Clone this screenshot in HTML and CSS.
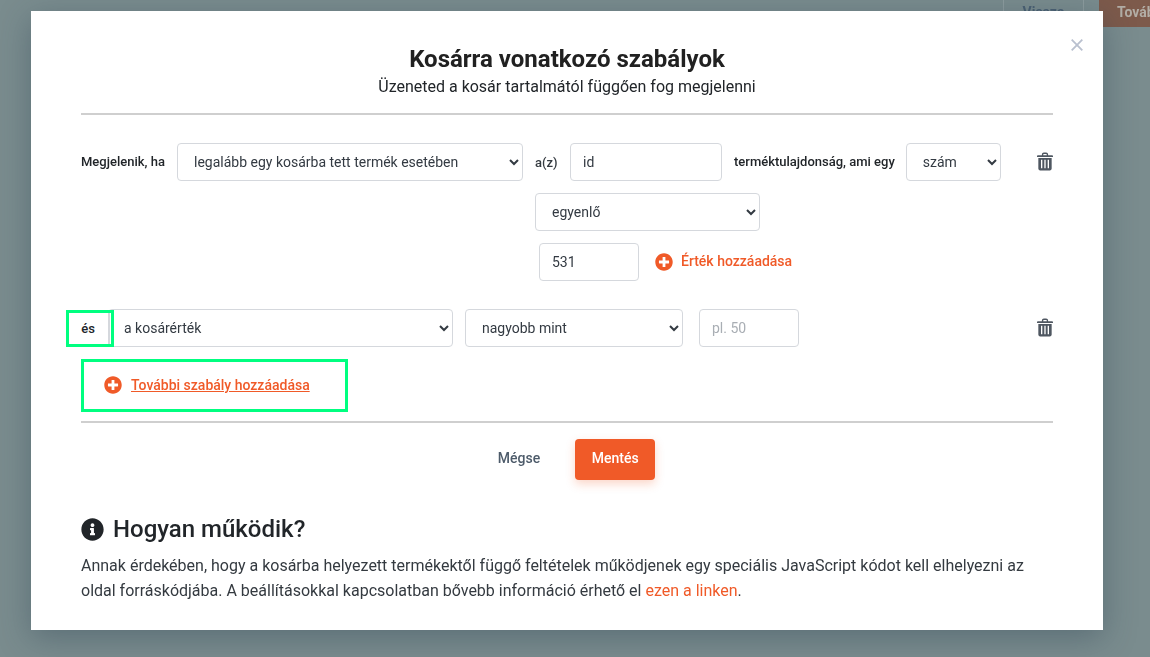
FILE: index.html
```html
<!DOCTYPE html>
<html lang="hu">
<head>
<meta charset="utf-8">
<title>Kosárra vonatkozó szabályok</title>
<link rel="stylesheet" href="styles.css">
</head>
<body>
<div class="backdrop"></div>
<div class="page-actions">
  <span class="page-back">Vissza</span>
  <span class="page-next">Tovább</span>
</div>
<main class="modal">
  <span class="close">
    <svg viewBox="0 0 12 12" width="12" height="12"><path d="M.7.7l10.600 10.600M11.300.7L.7 11.300" fill="none" stroke="currentColor" stroke-width="1.800"/></svg>
  </span>
  <header class="head">
    <h1 class="title">Kosárra vonatkozó szabályok</h1>
    <p class="subtitle">Üzeneted a kosár tartalmától függően fog megjelenni</p>
  </header>
  <section class="rules">
    <div class="rule rule-first">
      <span class="label label-start">Megjelenik, ha</span>
      <select class="field sel-scope"><option>legalább egy kosárba tett termék esetében</option></select>
      <div class="stack">
        <div class="line">
          <span class="az">a(z)</span>
          <input class="field in-prop" value="id">
          <span class="label">terméktulajdonság, ami egy</span>
          <select class="field sel-type"><option>szám</option></select>
        </div>
        <select class="field sel-op"><option>egyenlő</option></select>
        <div class="line line-value">
          <input class="field in-value" value="531">
          <a class="add-value">
            <svg class="plus" viewBox="0 0 512 512"><path fill="currentColor" d="M256 8C119 8 8 119 8 256s111 248 248 248 248-111 248-248S393 8 256 8zm144 276c0 6.600-5.400 12-12 12h-92v92c0 6.600-5.400 12-12 12h-56c-6.600 0-12-5.400-12-12v-92h-92c-6.600 0-12-5.400-12-12v-56c0-6.600 5.400-12 12-12h92v-92c0-6.600 5.400-12 12-12h56c6.600 0 12 5.400 12 12v92h92c6.600 0 12 5.400 12 12v56z"/></svg>
            <span class="add-value-text">Érték hozzáadása</span>
          </a>
        </div>
      </div>
      <svg class="trash" viewBox="0 0 18 20"><path fill="currentColor" fill-rule="evenodd" d="M5.500 3V2.200C5.500 1 6.500 0 7.700 0h2.600c1.200 0 2.200 1 2.200 2.200V3H17a1 1 0 0 1 1 1v1H0V4a1 1 0 0 1 1-1zm1.500 0h4V2.200c0-.4-.3-.7-.7-.7H7.700c-.4 0-.7.3-.7.7zM1.500 6h15v12c0 1.100-.9 2-2 2h-11c-1.100 0-2-.9-2-2zM4.500 8v9.500H6V8zm3.750 0v9.500h1.500V8zM12 8v9.500h1.500V8z"/></svg>
    </div>
    <div class="rule rule-second">
      <span class="and">és</span>
      <select class="field sel-value"><option>a kosárérték</option></select>
      <select class="field sel-cmp"><option>nagyobb mint</option></select>
      <input class="field in-amount" placeholder="pl. 50">
      <svg class="trash" viewBox="0 0 18 20"><path fill="currentColor" fill-rule="evenodd" d="M5.500 3V2.200C5.500 1 6.500 0 7.700 0h2.600c1.200 0 2.200 1 2.200 2.200V3H17a1 1 0 0 1 1 1v1H0V4a1 1 0 0 1 1-1zm1.500 0h4V2.200c0-.4-.3-.7-.7-.7H7.700c-.4 0-.7.3-.7.7zM1.500 6h15v12c0 1.100-.9 2-2 2h-11c-1.100 0-2-.9-2-2zM4.500 8v9.500H6V8zm3.750 0v9.500h1.500V8zM12 8v9.500h1.500V8z"/></svg>
    </div>
    <a class="add-rule">
      <svg class="plus" viewBox="0 0 512 512"><path fill="currentColor" d="M256 8C119 8 8 119 8 256s111 248 248 248 248-111 248-248S393 8 256 8zm144 276c0 6.600-5.400 12-12 12h-92v92c0 6.600-5.400 12-12 12h-56c-6.600 0-12-5.400-12-12v-92h-92c-6.600 0-12-5.400-12-12v-56c0-6.600 5.400-12 12-12h92v-92c0-6.600 5.400-12 12-12h56c6.600 0 12 5.400 12 12v92h92c6.600 0 12 5.400 12 12v56z"/></svg>
      <span class="add-rule-text">További szabály hozzáadása</span>
    </a>
  </section>
  <div class="actions">
    <span class="cancel">Mégse</span>
    <span class="save">Mentés</span>
  </div>
  <section class="help">
    <h2 class="help-title">
      <svg class="info" viewBox="0 0 512 512"><path fill="currentColor" d="M256 8C119 8 8 119.100 8 256c0 137 111 248 248 248s248-111 248-248C504 119.100 393 8 256 8zm0 110c23.200 0 42 18.800 42 42s-18.800 42-42 42-42-18.800-42-42 18.800-42 42-42zm56 254c0 6.600-5.400 12-12 12h-88c-6.600 0-12-5.400-12-12v-24c0-6.600 5.400-12 12-12h12v-64h-12c-6.600 0-12-5.400-12-12v-24c0-6.600 5.400-12 12-12h64c6.600 0 12 5.400 12 12v100h12c6.600 0 12 5.400 12 12v24z"/></svg>
      Hogyan működik?
    </h2>
    <p class="help-text">Annak érdekében, hogy a kosárba helyezett termékektől függő feltételek működjenek egy speciális JavaScript kódot kell elhelyezni az oldal forráskódjába. A beállításokkal kapcsolatban bővebb információ érhető el <a class="help-link">ezen a linken</a>.</p>
  </section>
</main>
</body>
</html>
```
FILE: styles.css
```css
* { box-sizing: border-box; }
html, body { height: 100%; }
body {
  margin: 0;
  overflow: hidden;
  background: #7a8c8e;
  font-family: Roboto, "Liberation Sans", sans-serif;
  color: #212529;
}
.backdrop {
  position: fixed;
  inset: 0;
  background: #7a8c8e;
}
.page-actions {
  position: relative;
  display: flex;
  justify-content: flex-end;
  gap: 15px;
  height: 27px;
  margin-right: -31px;
  font-size: 14px;
  font-weight: 700;
}
.page-back {
  width: 81px;
  height: 27px;
  padding-top: 4px;
  text-align: center;
  border: 1px solid #8d9c9e;
  border-top: 0;
  color: #4a6072;
}
.page-next {
  width: 82px;
  height: 27px;
  padding: 4px 0 0 18px;
  background: #7d5a4b;
  color: #b3aea6;
  white-space: nowrap;
  overflow: hidden;
}
.modal {
  position: absolute;
  left: 31px;
  top: 11px;
  width: 1072px;
  height: 619px;
  padding: 34px 50px 0;
  background: #fff;
  overflow: hidden;
  box-shadow: 0 8px 30px rgba(40, 60, 80, .38);
}
.close {
  position: absolute;
  right: 20px;
  top: 28px;
  display: flex;
  color: #b9c0cf;
}
.head {
  height: 70px;
  border-bottom: 2px solid #cfcfcf;
  text-align: center;
}
.title {
  margin: 0;
  font-size: 24px;
  line-height: 28px;
  font-weight: 700;
  color: #212121;
}
.subtitle {
  margin: 2px 0 0;
  font-size: 16px;
  line-height: 24px;
  color: #212529;
}
.rules {
  height: 308px;
  border-bottom: 2px solid #cfcfcf;
  padding-top: 28px;
}
.field {
  height: 38px;
  border: 1px solid #d5d8dd;
  border-radius: 4px;
  background: #fff;
  font-family: Roboto, "Liberation Sans", sans-serif;
  font-size: 14px;
  color: #333a42;
  padding: 0 12px;
  outline: 0;
}
.field::placeholder { color: #a9aeb4; opacity: 1; }
.rule { display: flex; position: relative; }
.rule-first { height: 166px; }
.rule-second { align-items: center; }
.label {
  font-size: 13px;
  font-weight: 500;
  line-height: 38px;
  color: #212529;
  white-space: nowrap;
}
.label-start { width: 96px; }
.sel-scope { width: 346px; margin-right: 12px; }
.stack { display: flex; flex-direction: column; align-items: flex-start; gap: 12px; }
.line { display: flex; align-items: center; }
.az { width: 35px; font-size: 13px; font-weight: 500; color: #343a40; }
.in-prop { width: 152px; margin-right: 12px; }
.sel-type { width: 95px; margin-left: 11px; }
.sel-op { width: 225px; }
.line-value { margin-left: 4px; }
.in-value { width: 100px; }
.plus { width: 18px; height: 18px; flex: none; }
.add-value {
  display: flex;
  align-items: center;
  gap: 8px;
  margin-left: 16px;
  font-size: 14px;
  font-weight: 500;
  color: #f05a28;
}
.add-value-text { margin-bottom: 2px; }
.trash {
  position: absolute;
  right: 0;
  top: 9px;
  width: 16px;
  height: 19px;
  color: #4f5761;
}
.and {
  position: relative;
  z-index: 1;
  display: flex;
  align-items: center;
  justify-content: center;
  width: 48px;
  height: 37px;
  align-self: flex-start;
  margin: 1px -6px 0 -15px;
  border: 3px solid #00ff80;
  padding-right: 4px;
  background: #fff;
  font-size: 13px;
  font-weight: 500;
}
.and::after {
  content: "";
  position: absolute;
  top: 0;
  bottom: 0;
  right: 1px;
  width: 2px;
  background: #d5d8dd;
}
.sel-value { width: 345px; padding-left: 11px; margin-right: 12px; }
.sel-cmp { width: 218px; margin-right: 16px; }
.in-amount { width: 100px; }
.add-rule {
  display: flex;
  align-items: center;
  gap: 9px;
  width: 267px;
  height: 53px;
  margin-top: 12px;
  padding: 0 0 1px 20px;
  border: 3px solid #00ff80;
  color: #f05a28;
  font-size: 14px;
  font-weight: 500;
}
.add-rule-text { text-decoration: underline; }
.actions {
  display: flex;
  justify-content: center;
  align-items: center;
  gap: 35px;
  margin-top: 16px;
  padding-left: 19px;
  font-size: 14px;
  font-weight: 500;
}
.cancel { color: #4d5b6a; margin-bottom: 3px; }
.save {
  width: 80px;
  height: 41px;
  line-height: 39px;
  text-align: center;
  background: #f05a28;
  color: #fff;
  border-radius: 4px;
  box-shadow: 0 4px 10px rgba(240, 90, 40, .25);
}
.help { margin-top: 31px; }
.help-title {
  display: flex;
  align-items: center;
  gap: 9px;
  margin: 0;
  font-size: 24px;
  line-height: 36px;
  font-weight: 500;
  color: #212529;
}
.info { width: 23px; height: 23px; flex: none; }
.help-text {
  margin: 7px 0 0;
  font-size: 16px;
  line-height: 24.500px;
  color: #343a40;
}
.help-link { color: #f05a28; }
```
